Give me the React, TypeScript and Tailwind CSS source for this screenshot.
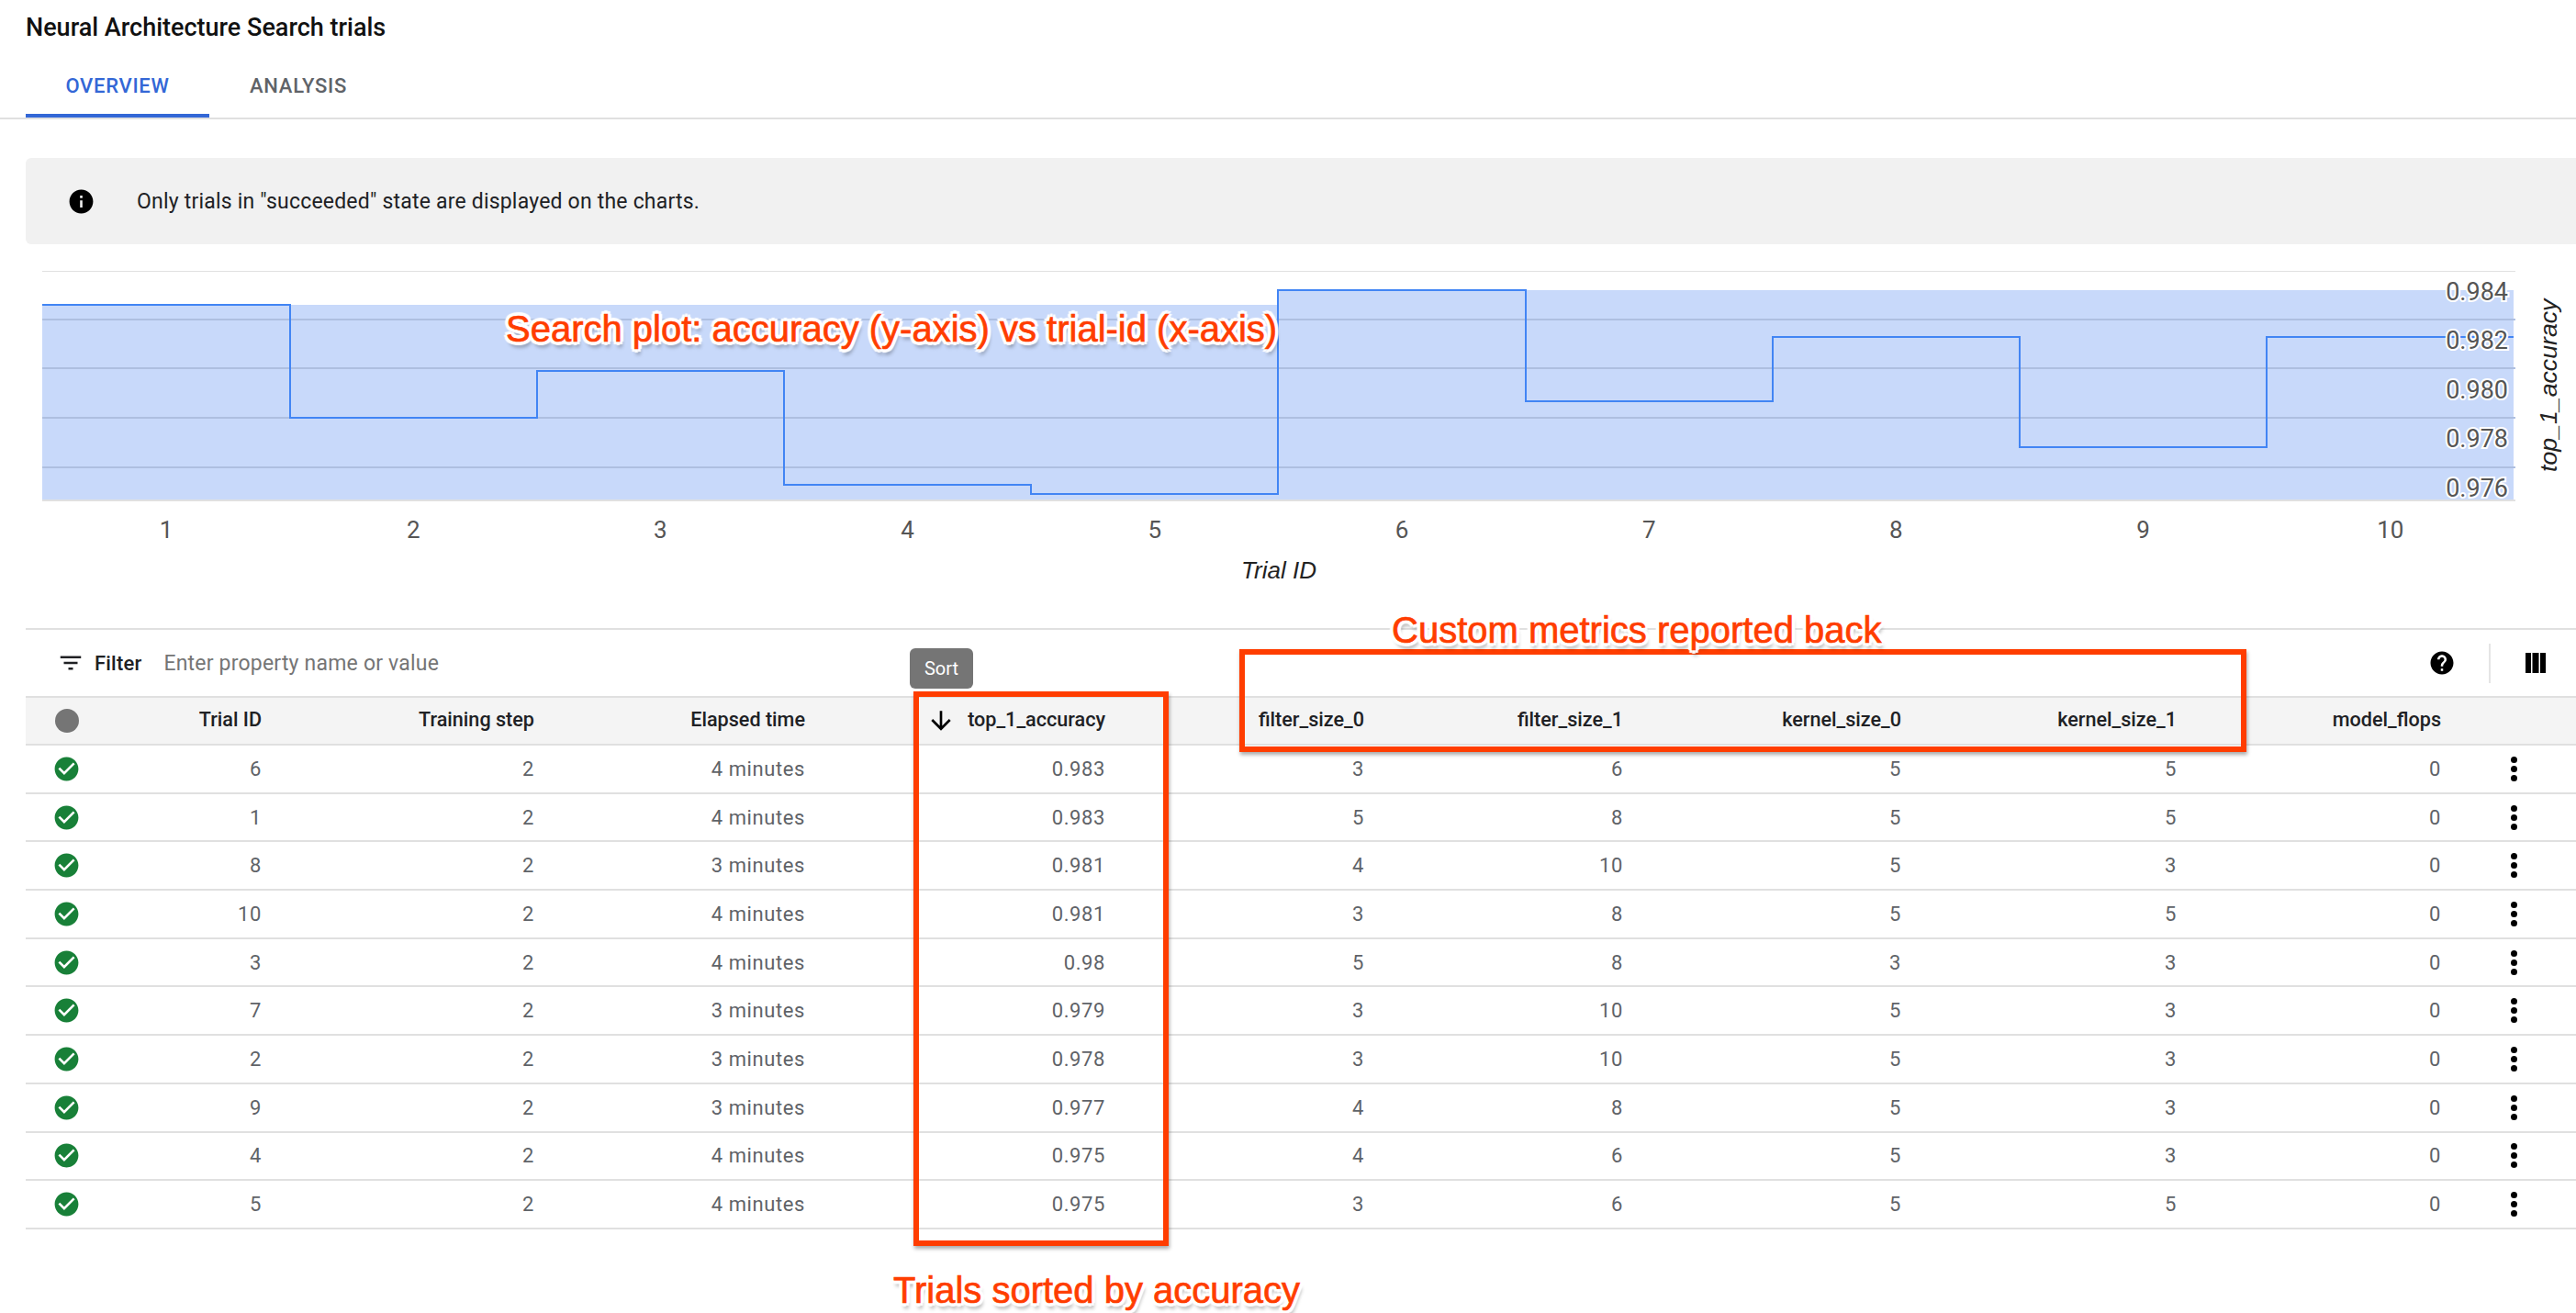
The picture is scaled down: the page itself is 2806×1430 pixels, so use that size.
const trials = [
  ["6", "2", "4 minutes", "0.983", "3", "6", "5", "5", "0"],
  ["1", "2", "4 minutes", "0.983", "5", "8", "5", "5", "0"],
  ["8", "2", "3 minutes", "0.981", "4", "10", "5", "3", "0"],
  ["10", "2", "4 minutes", "0.981", "3", "8", "5", "5", "0"],
  ["3", "2", "4 minutes", "0.98", "5", "8", "3", "3", "0"],
  ["7", "2", "3 minutes", "0.979", "3", "10", "5", "3", "0"],
  ["2", "2", "3 minutes", "0.978", "3", "10", "5", "3", "0"],
  ["9", "2", "3 minutes", "0.977", "4", "8", "5", "3", "0"],
  ["4", "2", "4 minutes", "0.975", "4", "6", "5", "3", "0"],
  ["5", "2", "4 minutes", "0.975", "3", "6", "5", "5", "0"],
];

const headers = ["Trial ID", "Training step", "Elapsed time", "top_1_accuracy", "filter_size_0", "filter_size_1", "kernel_size_0", "kernel_size_1", "model_flops"];

const gridCols = "grid grid-cols-[60px_197px_297px_295px_327px_282px_282px_303px_300px_288px_147px] items-center";
const noteText =
  "absolute font-['Liberation_Sans',Arial,sans-serif] text-[40px] leading-none whitespace-nowrap text-[#ff3d00] [-webkit-text-stroke:0.7px_#ff3d00] [text-shadow:4px_0_1px_#fff,-4px_0_1px_#fff,0_4px_1px_#fff,0_-4px_1px_#fff,3px_3px_1px_#fff,-3px_3px_1px_#fff,3px_-3px_1px_#fff,-3px_-3px_1px_#fff,2px_6px_4px_#0006]";
const redBox = "absolute border-[6px] border-[#ff3d00] shadow-[1px_3px_4px_#0005]";

function MaterialIcon({ d, size, className }: { d: string; size: number; className?: string }) {
  return (
    <svg width={size} height={size} viewBox="0 0 24 24" fill="currentColor" className={className}>
      <path d={d} />
    </svg>
  );
}

function SearchPlot() {
  const xLabels = ["1", "2", "3", "4", "5", "6", "7", "8", "9", "10"];
  const yLabels = [
    ["0.984", 327],
    ["0.982", 380],
    ["0.980", 434],
    ["0.978", 487],
    ["0.976", 541],
  ] as const;

  return (
    <svg width="2806" height="389" viewBox="0 295 2806 389" className="block mt-[29px]" fontFamily="Roboto, sans-serif">
      <line x1="46" x2="2740" y1="295" y2="295" stroke="#e0e0e0" strokeWidth="2" />
      <path d="M46 332H1392V316H2738V545H46Z" fill="#c8d9fa" />
      {[348, 401, 455, 509].map((y) => (
        <line key={y} x1="46" x2="2740" y1={y} y2={y} stroke="#aebfe0" strokeWidth="2" />
      ))}
      <line x1="46" x2="2740" y1="545" y2="545" stroke="#e0e0e0" strokeWidth="2" />
      <path
        d="M46 332H316V455H585V404H854V528H1123V538H1392V316H1662V437H1931V367H2200V487H2469V367H2738"
        fill="none"
        stroke="#4285f4"
        strokeWidth="2"
      />
      {yLabels.map(([label, y]) => (
        <text key={label} x="2732" y={y} textAnchor="end" fontSize="27" fill="#555" stroke="#fff" strokeWidth="4" paintOrder="stroke">
          {label}
        </text>
      ))}
      {xLabels.map((label, i) => (
        <text key={label} x={181 + i * 269.2} y="586" textAnchor="middle" fontSize="26" fill="#555">
          {label}
        </text>
      ))}
      <text x="1393" y="630" textAnchor="middle" fontSize="26" fontStyle="italic" fontFamily="Liberation Sans, Arial, sans-serif" fill="#222">
        Trial ID
      </text>
      <text
        transform="translate(2785 514) rotate(-90)"
        fontSize="26.7"
        fontStyle="italic"
        fontFamily="Liberation Sans, Arial, sans-serif"
        fill="#222"
      >
        top_1_accuracy
      </text>
    </svg>
  );
}

function TrialsTable() {
  return (
    <div className="ml-[28px]">
      <div className="flex items-center h-[74px] border-t-2 border-[#e0e0e0]">
        <MaterialIcon d="M10 18h4v-2h-4v2zM3 6v2h18V6H3zm3 7h12v-2H6v2z" size={30} className="ml-[34px] text-[#202124]" />
        <span className="ml-[11px] font-medium text-[22px] tracking-[0.2px] text-[#202124]">Filter</span>
        <span className="ml-[24px] pt-[2px] text-[23px] tracking-[0.2px] text-[#757575]">Enter property name or value</span>
        <MaterialIcon
          d="M12 2C6.48 2 2 6.48 2 12s4.48 10 10 10 10-4.48 10-10S17.52 2 12 2zm1 17h-2v-2h2v2zm2.07-7.75l-.9.92C13.45 12.9 13 13.5 13 15h-2v-.5c0-1.1.45-2.1 1.17-2.83l1.24-1.26c.37-.36.59-.86.59-1.41 0-1.1-.9-2-2-2s-2 .9-2 2H8c0-2.21 1.79-4 4-4s4 1.79 4 4c0 .88-.36 1.68-.93 2.25z"
          size={30}
          className="ml-auto text-black"
        />
        <div className="ml-[36px] w-[2px] h-[43px] bg-[#e5e5e5]" />
        <svg width="22" height="22" viewBox="0 0 22 22" fill="currentColor" className="ml-[38px] mr-[33px] text-black">
          <rect x="0" y="0" width="6" height="22" />
          <rect x="7.5" y="0" width="7" height="22" />
          <rect x="16" y="0" width="6" height="22" />
        </svg>
      </div>

      <div className={`${gridCols} h-[54px] bg-[#f4f4f4] border-y-2 border-[#e0e0e0] font-medium text-[21.6px] text-[#202124]`}>
        <div className="pl-[32px]">
          <div className="w-[26px] h-[26px] rounded-full bg-[#757575]" />
        </div>
        {headers.map((h, i) => (
          <div key={h} className="flex items-center justify-end gap-[13px] -mt-[2px]">
            {i === 3 && <MaterialIcon d="M20 12l-1.41-1.41L13 16.17V4h-2v12.17l-5.58-5.59L4 12l8 8 8-8z" size={32} className="-ml-[4px] mt-[2px] text-black" />}
            <span>{h}</span>
          </div>
        ))}
      </div>

      {trials.map((row) => (
        <div key={row[0]} className={`${gridCols} h-[52.7px] border-b-2 border-[#e0e0e0] text-[22px] text-[#5f6368]`}>
          <div className="pl-[29px]">
            <MaterialIcon
              d="M12 2C6.48 2 2 6.48 2 12s4.48 10 10 10 10-4.48 10-10S17.52 2 12 2zm-2 15l-5-5 1.41-1.41L10 14.17l7.59-7.59L19 8l-9 9z"
              size={31}
              className="text-[#188038]"
            />
          </div>
          {row.map((cell, i) => (
            <div key={i} className="text-right tracking-[0.6px]">
              {cell}
            </div>
          ))}
          <div className="pl-[76px]">
            <div className="flex flex-col gap-[3px]">
              <span className="w-[7px] h-[7px] rounded-full bg-black" />
              <span className="w-[7px] h-[7px] rounded-full bg-black" />
              <span className="w-[7px] h-[7px] rounded-full bg-black" />
            </div>
          </div>
        </div>
      ))}
    </div>
  );
}

export default function App() {
  return (
    <div className="relative w-[2806px] h-[1430px] overflow-hidden bg-white font-['Roboto',sans-serif]">
      <div className="h-[60px] pt-[1px] flex items-center pl-[28px] text-[27px] font-medium text-[#111]">Neural Architecture Search trials</div>

      <div className="flex h-[70px] border-b-2 border-[#e0e0e0] pl-[28px] text-[22px] font-medium tracking-[0.7px]">
        <div className="w-[200px] h-[68px] pt-[2px] flex items-center justify-center border-b-4 border-[#3367d6] text-[#3367d6]">OVERVIEW</div>
        <div className="w-[194px] h-[68px] pt-[2px] pb-[4px] flex items-center justify-center text-[#5f6368]">ANALYSIS</div>
      </div>

      <div className="ml-[28px] mt-[42px] h-[94px] flex items-center rounded-l-[6px] bg-[#f1f1f1] text-[23px] tracking-[0.2px] text-[#202124]">
        <MaterialIcon
          d="M12 2C6.48 2 2 6.48 2 12s4.48 10 10 10 10-4.48 10-10S17.52 2 12 2zm1 15h-2v-6h2v6zm0-8h-2V7h2v2z"
          size={31}
          className="ml-[45px] text-black"
        />
        <span className="ml-[45px] pt-[3px]">Only trials in "succeeded" state are displayed on the charts.</span>
      </div>

      <SearchPlot />
      <TrialsTable />

      <div className="absolute left-[991px] top-[706px] w-[69px] h-[44px] flex items-center justify-center rounded-[6px] bg-[#757575] text-[20px] text-white">Sort</div>

      <div className={`${redBox} left-[995px] top-[753px] w-[278px] h-[604px]`} />
      <div className={`${redBox} left-[1350px] top-[707px] w-[1097px] h-[112px]`} />

      <div className={`${noteText} left-[551px] top-[338px]`}>Search plot: accuracy (y-axis) vs trial-id (x-axis)</div>
      <div className={`${noteText} left-[1516px] top-[666px]`}>Custom metrics reported back</div>
      <div className={`${noteText} left-[973px] top-[1385px]`}>Trials sorted by accuracy</div>
    </div>
  );
}
